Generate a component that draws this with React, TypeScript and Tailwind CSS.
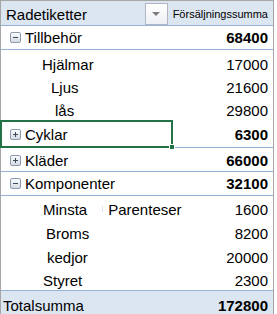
import type { ReactNode } from "react";

function Toggle({ open }: { open: boolean }) {
  return (
    <span className="relative mr-[4px] inline-block h-[11px] w-[11px] shrink-0 rounded-[2px] border border-[#8c9bb0] bg-gradient-to-b from-[#fbfcfd] to-[#d6dbe3]">
      <span className="absolute left-[2px] top-[4px] h-[1px] w-[5px] bg-[#3b4a5c]" />
      {!open && (
        <span className="absolute left-[4px] top-[2px] h-[5px] w-[1px] bg-[#3b4a5c]" />
      )}
    </span>
  );
}

function ParentRow({
  label,
  value,
  open,
  className = "",
  children,
}: {
  label: string;
  value: string;
  open: boolean;
  className?: string;
  children?: ReactNode;
}) {
  return (
    <div
      className={`relative flex items-center justify-between border-b border-[#95b3d7] pl-[9px] pr-[5px] ${className}`}
    >
      <div className="flex items-center">
        <Toggle open={open} />
        <span>{label}</span>
      </div>
      <span className="font-bold">{value}</span>
      {children}
    </div>
  );
}

function ChildRow({
  label,
  value,
  indent,
  className = "",
  extra,
}: {
  label: string;
  value: string;
  indent: string;
  className?: string;
  extra?: ReactNode;
}) {
  return (
    <div className={`flex items-center justify-between pr-[5px] ${className}`}>
      <div className={`flex items-center ${indent}`}>
        <span>{label}</span>
        {extra}
      </div>
      <span>{value}</span>
    </div>
  );
}

export default function App() {
  return (
    <div className="h-[314px] w-[277px] overflow-hidden bg-white font-['Liberation_Sans',Arial,sans-serif] text-[15px] leading-none text-black">
      <div className="w-[274px] border-x border-t border-[#a6a6a6]">
        <div className="flex h-[25px] items-center border-b border-[#95b3d7] bg-[#dce6f1] pl-[5px] pr-[5px]">
          <span className="flex-1 pt-[3px]">Radetiketter</span>
          <span className="mr-[5px] mt-[2px] flex h-[22px] w-[23px] items-center justify-center border border-[#b0b7c3] bg-gradient-to-b from-white to-[#eef0f4]">
            <span className="h-0 w-0 border-x-[4px] border-t-[4px] border-x-transparent border-t-[#7c7c7c]" />
          </span>
          <span className="pt-[2px] text-[11px]">Försäljningssumma</span>
        </div>

        <ParentRow label="Tillbehör" value="68400" open className="h-[24px]" />
        <ChildRow label="Hjälmar" value="17000" indent="pl-[41px]" className="h-[24px] pt-[4px]" />
        <ChildRow label="Ljus" value="21600" indent="pl-[50px]" className="h-[23px] pt-[3px]" />
        <ChildRow label="lås" value="29800" indent="pl-[54px]" className="h-[23px] pt-[3px]" />

        <ParentRow label="Cyklar" value="6300" open={false} className="h-[28px] pt-[1px]">
          <div className="absolute left-[-1px] top-0 h-[28px] w-[173px] border-2 border-[#217346]" />
          <div className="absolute left-[168px] top-[24px] h-[6px] w-[6px] border border-white bg-[#217346]" />
        </ParentRow>
        <ParentRow label="Kläder" value="66000" open={false} className="h-[24px] pt-[1px]" />
        <ParentRow label="Komponenter" value="32100" open className="h-[24px]" />

        <ChildRow
          label="Minsta"
          value="1600"
          indent="pl-[42px]"
          className="h-[24px] pt-[2px]"
          extra={
            <>
              <span className="ml-[15px] mr-[5px] h-[6px] w-[1px] bg-[#d6e6f5]" />
              <span>Parenteser</span>
            </>
          }
        />
        <ChildRow label="Broms" value="8200" indent="pl-[45px]" className="h-[24px] pt-[3px]" />
        <ChildRow label="kedjor" value="20000" indent="pl-[46px]" className="h-[23px] pt-[3px]" />
        <ChildRow label="Styret" value="2300" indent="pl-[42px]" className="h-[23px] pt-[3px]" />

        <div className="flex h-[26px] items-center justify-between border-t border-[#95b3d7] bg-[#dce6f1] pl-[2px] pr-[5px] pt-[3px]">
          <span>Totalsumma</span>
          <span className="font-bold">172800</span>
        </div>
      </div>
    </div>
  );
}
